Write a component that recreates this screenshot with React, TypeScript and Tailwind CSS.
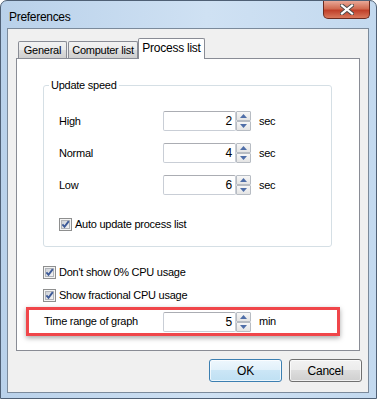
import React from "react";

const ui = "font-['Liberation_Sans',Arial,sans-serif] text-[11px] tracking-[-0.25px] text-black";

function Arrow({ up }: { up?: boolean }) {
  return (
    <svg width="7" height="4" viewBox="0 0 7 4">
      <polygon points={up ? "0,4 3.5,0 7,4" : "0,0 3.5,4 7,0"} fill="#4f6ea8" />
    </svg>
  );
}

function Spinner() {
  return (
    <div className="flex h-[20px] w-[15px] flex-col">
      <div className="flex h-[10px] items-center justify-center rounded-[1px] border border-[#b7bcc3] bg-[linear-gradient(#f7f7f7,#e4e4e4)]">
        <Arrow up />
      </div>
      <div className="flex h-[10px] items-center justify-center rounded-[1px] border border-[#b7bcc3] bg-[linear-gradient(#f7f7f7,#e4e4e4)]">
        <Arrow />
      </div>
    </div>
  );
}

function NumberRow({ label, value, unit, labelW = "w-[104px]" }: { label: string; value: string; unit: string; labelW?: string }) {
  return (
    <div className="flex h-[20px] items-center">
      <span className={labelW}>{label}</span>
      <div className="flex h-[20px] w-[73px] items-center justify-end rounded-[2px] border border-[#c9ced6] border-t-[#abadb3] bg-white pr-[3px] text-[12px]">
        {value}
      </div>
      <Spinner />
      <span className="ml-[8px]">{unit}</span>
    </div>
  );
}

function CheckBox({ label }: { label: string }) {
  return (
    <div className="flex h-[13px] items-center gap-[3px]">
      <svg width="13" height="13" viewBox="0 0 13 13">
        <defs>
          <linearGradient id="cbg" x1="0" y1="0" x2="1" y2="1">
            <stop offset="0" stopColor="#cbcfd5" />
            <stop offset="1" stopColor="#f6f6f6" />
          </linearGradient>
        </defs>
        <rect x="0.5" y="0.5" width="12" height="12" fill="#f4f4f4" stroke="#8e8f8f" />
        <rect x="2.5" y="2.5" width="8" height="8" fill="url(#cbg)" stroke="#b1b4b9" />
        <path d="M3.4 6.4 L5.5 8.8 L9.8 3.2" fill="none" stroke="#3d5a98" strokeWidth="1.9" />
      </svg>
      <span>{label}</span>
    </div>
  );
}

function Tab({ label, active, w }: { label: string; active?: boolean; w: string }) {
  return active ? (
    <div className={`relative z-10 -mb-[1px] flex h-[21px] items-center justify-center rounded-t-[2px] border border-b-0 border-[#898c95] bg-white pb-[2px] text-[12px] ${w}`}>
      {label}
    </div>
  ) : (
    <div className={`flex h-[17px] items-center justify-center rounded-t-[2px] border border-b-0 border-[#898c95] bg-[linear-gradient(#f2f2f2,#ebebeb_50%,#dddddd_50%,#cfcfcf)] ${w}`}>
      {label}
    </div>
  );
}

export default function App() {
  return (
    <div className={`flex h-[399px] w-[377px] flex-col overflow-hidden rounded-t-[7px] border border-[#4f6075] bg-[linear-gradient(90deg,#b9d1ea,#cfe1f3_55%,#c3d9ef)] ${ui}`}>
      {/* title bar */}
      <div className="flex h-[27px] items-start justify-between pl-[8px] pr-[6px]">
        <span className="pt-[7px] font-['Liberation_Sans',Arial,sans-serif] text-[12px] tracking-[-0.3px]">Preferences</span>
        <div className="flex h-[18px] w-[47px] items-center justify-center rounded-b-[5px] border border-t-0 border-[#6b2b20] bg-[linear-gradient(#e9a897,#d16b51_45%,#c0402a_55%,#d9785c)]">
          <svg width="14" height="11" viewBox="0 0 14 11">
            <path d="M2 1.5 L12 9.5 M12 1.5 L2 9.5" stroke="#4a4a4a" strokeWidth="4" strokeLinecap="square" />
            <path d="M2 1.5 L12 9.5 M12 1.5 L2 9.5" stroke="#ffffff" strokeWidth="2.2" strokeLinecap="square" />
          </svg>
        </div>
      </div>

      {/* client area */}
      <div className="mb-[5px] ml-[6px] mr-[7px] flex flex-1 flex-col border border-[#7b8a9b] bg-[#f0f0f0] pt-[9px] pb-[10px]">
        <div className="mx-[8px] flex flex-col">
          <div className="flex h-[20px] items-end pl-[2px]">
            <Tab label="General" w="w-[49px]" />
            <div className="w-[1px]" />
            <Tab label="Computer list" w="w-[70px]" />
            <Tab label="Process list" w="w-[67px]" active />
          </div>
          <div className="flex h-[293px] flex-col border border-[#898c95] bg-white">
            <fieldset className="ml-[26px] mt-[19px] w-[289px] rounded-[3px] border border-[#d5dfe5] pb-[15px]">
              <legend className="ml-[5px] px-[2px] leading-[14px]">Update speed</legend>
              <div className="pl-[15px]">
                <div className="mt-[19px] flex flex-col gap-[12px]">
                  <NumberRow label="High" value="2" unit="sec" />
                  <NumberRow label="Normal" value="4" unit="sec" />
                  <NumberRow label="Low" value="6" unit="sec" />
                </div>
                <div className="mt-[23px]">
                  <CheckBox label="Auto update process list" />
                </div>
              </div>
            </fieldset>
            <div className="ml-[26px] mt-[19px] flex flex-col gap-[10px]">
              <CheckBox label="Don't show 0% CPU usage" />
              <CheckBox label="Show fractional CPU usage" />
            </div>
            <div className="ml-[9px] mt-[5px] flex h-[29px] w-[314px] items-center border-[3px] border-[#f0464a] pl-[15px] shadow-[0_2px_5px_rgba(0,0,0,0.35)]">
              <NumberRow label="Time range of graph" value="5" unit="min" labelW="w-[119px]" />
            </div>
          </div>
        </div>
        <div className="mr-[6px] mt-[8px] flex justify-end gap-[7px]">
          <button className="h-[23px] w-[73px] rounded-[3px] border border-[#3c7fb1] bg-[linear-gradient(#eef7fd,#e0f0fa_50%,#cbe6f6_50%,#bfe0f3)] text-[12px] shadow-[inset_0_0_0_1px_rgba(255,255,255,0.7)]">
            OK
          </button>
          <button className="h-[23px] w-[73px] rounded-[3px] border border-[#707070] bg-[linear-gradient(#f2f2f2,#ebebeb_50%,#dddddd_50%,#cfcfcf)] text-[12px] shadow-[inset_0_0_0_1px_rgba(255,255,255,0.7)]">
            Cancel
          </button>
        </div>
      </div>
    </div>
  );
}
